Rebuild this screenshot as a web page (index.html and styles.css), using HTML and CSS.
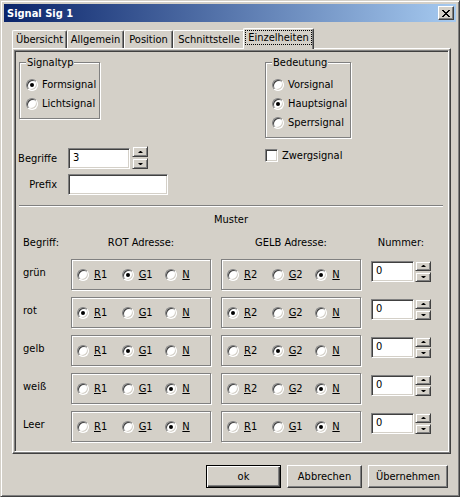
FILE: index.html
```html
<!DOCTYPE html>
<html lang="de">
<head>
<meta charset="utf-8">
<title>Signal Sig 1</title>
<link rel="stylesheet" href="styles.css">
</head>
<body>
<div class="win">
  <div class="titlebar">
    <span class="title">Signal Sig 1</span>
    <span class="close"><svg width="8" height="7" viewBox="0 0 8 7" shape-rendering="crispEdges"><path d="M0 0h2v1h-2z M6 0h2v1h-2z M1 1h2v1h-2z M5 1h2v1h-2z M2 2h4v1h-4z M3 3h2v1h-2z M2 4h4v1h-4z M1 5h2v1h-2z M5 5h2v1h-2z M0 6h2v1h-2z M6 6h2v1h-2z" fill="#000"/></svg></span>
  </div>
  <div class="tabs">
    <div class="tab w1">Übersicht</div>
    <div class="tab w2">Allgemein</div>
    <div class="tab w3">Position</div>
    <div class="tab w4">Schnittstelle</div>
    <div class="tab sel"><span class="focus">Einzelheiten</span></div>
  </div>
  <div class="panel">
    <div class="frame">
      <div class="top">
        <div class="colL">
          <div class="group gtyp">
            <span class="legend">Signaltyp</span>
            <div class="opt"><span class="rb on"></span>Formsignal</div>
            <div class="opt"><span class="rb"></span>Lichtsignal</div>
          </div>
          <div class="frow r1">
            <span class="flabel lb">Begriffe</span>
            <div class="field fbeg">3</div>
            <div class="spin big"><span class="sb up"></span><span class="sb dn"></span></div>
          </div>
          <div class="frow r2">
            <span class="flabel lpx">Prefix</span>
            <div class="field fpre"></div>
          </div>
        </div>
        <div class="colR">
          <div class="group gbed">
            <span class="legend">Bedeutung</span>
            <div class="opt"><span class="rb"></span>Vorsignal</div>
            <div class="opt"><span class="rb on"></span>Hauptsignal</div>
            <div class="opt"><span class="rb"></span>Sperrsignal</div>
          </div>
          <div class="chkrow"><span class="cb"></span>Zwergsignal</div>
        </div>
      </div>
      <div class="sep"></div>
      <div class="muster">Muster</div>
      <div class="mhead">
        <span class="c-lab">Begriff:</span>
        <span class="c-box">ROT Adresse:</span>
        <span class="c-box">GELB Adresse:</span>
        <span class="c-num">Nummer:</span>
      </div>
      <div class="mrows">
        <div class="mrow">
          <span class="c-lab">grün</span>
          <div class="abox"><span class="aopt"><span class="rb"></span><u>R</u>1</span><span class="aopt"><span class="rb on"></span><u>G</u>1</span><span class="aopt"><span class="rb"></span><u>N</u></span></div>
          <div class="abox"><span class="aopt"><span class="rb"></span><u>R</u>2</span><span class="aopt"><span class="rb"></span><u>G</u>2</span><span class="aopt"><span class="rb on"></span><u>N</u></span></div>
          <div class="field fnum">0</div>
          <div class="spin small"><span class="sb up"></span><span class="sb dn"></span></div>
        </div>
        <div class="mrow">
          <span class="c-lab">rot</span>
          <div class="abox"><span class="aopt"><span class="rb on"></span><u>R</u>1</span><span class="aopt"><span class="rb"></span><u>G</u>1</span><span class="aopt"><span class="rb"></span><u>N</u></span></div>
          <div class="abox"><span class="aopt"><span class="rb on"></span><u>R</u>2</span><span class="aopt"><span class="rb"></span><u>G</u>2</span><span class="aopt"><span class="rb"></span><u>N</u></span></div>
          <div class="field fnum">0</div>
          <div class="spin small"><span class="sb up"></span><span class="sb dn"></span></div>
        </div>
        <div class="mrow">
          <span class="c-lab">gelb</span>
          <div class="abox"><span class="aopt"><span class="rb"></span><u>R</u>1</span><span class="aopt"><span class="rb on"></span><u>G</u>1</span><span class="aopt"><span class="rb"></span><u>N</u></span></div>
          <div class="abox"><span class="aopt"><span class="rb"></span><u>R</u>2</span><span class="aopt"><span class="rb on"></span><u>G</u>2</span><span class="aopt"><span class="rb"></span><u>N</u></span></div>
          <div class="field fnum">0</div>
          <div class="spin small"><span class="sb up"></span><span class="sb dn"></span></div>
        </div>
        <div class="mrow">
          <span class="c-lab">weiß</span>
          <div class="abox"><span class="aopt"><span class="rb"></span><u>R</u>1</span><span class="aopt"><span class="rb"></span><u>G</u>1</span><span class="aopt"><span class="rb on"></span><u>N</u></span></div>
          <div class="abox"><span class="aopt"><span class="rb"></span><u>R</u>2</span><span class="aopt"><span class="rb"></span><u>G</u>2</span><span class="aopt"><span class="rb on"></span><u>N</u></span></div>
          <div class="field fnum">0</div>
          <div class="spin small"><span class="sb up"></span><span class="sb dn"></span></div>
        </div>
        <div class="mrow">
          <span class="c-lab">Leer</span>
          <div class="abox"><span class="aopt"><span class="rb"></span><u>R</u>1</span><span class="aopt"><span class="rb"></span><u>G</u>1</span><span class="aopt"><span class="rb on"></span><u>N</u></span></div>
          <div class="abox"><span class="aopt"><span class="rb"></span><u>R</u>1</span><span class="aopt"><span class="rb"></span><u>G</u>1</span><span class="aopt"><span class="rb on"></span><u>N</u></span></div>
          <div class="field fnum">0</div>
          <div class="spin small"><span class="sb up"></span><span class="sb dn"></span></div>
        </div>
      </div>
    </div>
  </div>
  <div class="footer">
    <div class="btn def">ok</div>
    <div class="btn">Abbrechen</div>
    <div class="btn wide">Übernehmen</div>
  </div>
</div>
</body>
</html>
```
FILE: styles.css
```css
html, body {
  margin: 0;
  padding: 0;
  background: #d4d0c8;
}
body {
  font-family: "DejaVu Sans Condensed", "Liberation Sans", sans-serif;
  font-size: 11px;
  line-height: 13px;
  color: #000;
}
* { box-sizing: border-box; }

.win {
  width: 460px;
  height: 497px;
  border: 1px solid;
  border-color: #d4d0c8 #404040 #404040 #d4d0c8;
  box-shadow: inset 1px 1px #fff, inset -1px -1px #808080;
  padding: 3px;
  background: #d4d0c8;
}

.titlebar {
  height: 18px;
  display: flex;
  align-items: center;
  justify-content: space-between;
  padding-left: 3px;
  padding-right: 2px;
  background: linear-gradient(to right, #0a246a, #a6caf0);
}
.title {
  color: #fff;
  font-weight: bold;
}
.close {
  width: 16px;
  height: 14px;
  display: flex;
  align-items: center;
  justify-content: center;
  background: #d4d0c8;
  border: 1px solid;
  border-color: #fff #404040 #404040 #fff;
  box-shadow: inset -1px -1px #808080;
  padding-right: 1px;
}
.close svg { display: block; }

.tabs {
  height: 26px;
  padding-top: 6px;
  padding-left: 8px;
  display: flex;
  align-items: flex-start;
}
.tab {
  height: 18px;
  margin-top: 2px;
  border: 1px solid;
  border-bottom: 0;
  border-color: #fff #404040 #fff #fff;
  border-radius: 2px 2px 0 0;
  box-shadow: inset -1px 0 #808080;
  text-align: center;
  padding-top: 2px;
  background: #d4d0c8;
  white-space: nowrap;
}
.w1 { width: 55px; }
.w2 { width: 57px; }
.w3 { width: 49px; }
.w4 { width: 72px; }
.tab.sel {
  width: 71px;
  height: 21px;
  margin: 0 -2px -1px -2px;
  padding-top: 1px;
  position: relative;
  z-index: 1;
}
.focus {
  display: inline-block;
  border: 1px dotted #000;
  padding: 0 2px;
}

.panel {
  margin-left: 8px;
  width: 439px;
  height: 406px;
  border: 1px solid;
  border-color: #fff #404040 #404040 #fff;
  box-shadow: inset -1px -1px #808080;
  padding: 1px;
}
.frame {
  height: 100%;
  border: 1px solid;
  border-color: #808080 #fff #fff #808080;
  box-shadow: inset 1px 1px #404040, inset -1px -1px #d4d0c8;
}

.top {
  display: flex;
}
.colL { width: 250px; }
.colR { flex: 1; }

.group {
  border: 1px solid #808080;
  box-shadow: inset 1px 1px #fff, 1px 1px #fff;
  padding: 0 6px 5px 6px;
  margin-top: 11px;
}
.gtyp { width: 81px; margin-left: 4px; }
.gbed { width: 86px; }
.legend {
  display: block;
  width: max-content;
  margin: -7px 0 6px 0;
  padding: 0 1px;
  background: #d4d0c8;
}
.opt {
  height: 19px;
  display: flex;
  align-items: center;
  white-space: nowrap;
}
.opt .rb { margin-right: 4px; }

.rb {
  flex: none;
  width: 12px;
  height: 12px;
  border-radius: 50%;
  border: 1px solid;
  border-color: #808080 #fff #fff #808080;
  background: #fff;
  box-shadow: inset 1px 1px #404040, inset -1px -1px #d4d0c8;
  display: flex;
  align-items: center;
  justify-content: center;
}
.rb.on::after {
  content: "";
  width: 4px;
  height: 4px;
  border-radius: 50%;
  background: #000;
}

.cb {
  flex: none;
  width: 13px;
  height: 13px;
  border: 1px solid;
  border-color: #808080 #fff #fff #808080;
  background: #fff;
  box-shadow: inset 1px 1px #404040, inset -1px -1px #d4d0c8;
  margin-right: 4px;
}
.chkrow {
  display: flex;
  align-items: center;
  margin-top: 11px;
  height: 13px;
}

.field {
  border: 1px solid;
  border-color: #808080 #fff #fff #808080;
  background: #fff;
  box-shadow: inset 1px 1px #404040, inset -1px -1px #d4d0c8;
  padding: 2px 3px 0 4px;
}

.frow {
  display: flex;
  align-items: flex-start;
}
.r1 { margin-top: 27px; }
.r2 { margin-top: 5px; }
.flabel {
  width: 42px;
  margin-right: 11px;
  text-align: right;
}
.lb { margin-top: 6px; }
.lpx { margin-top: 4px; }
.fbeg { width: 62px; height: 21px; margin-top: 2px; }
.fpre { width: 100px; height: 21px; }

.spin {
  width: 16px;
  display: flex;
  flex-direction: column;
  gap: 1px;
}
.spin.big { height: 23px; margin-left: 2px; }
.spin.small { height: 21px; margin-left: 1px; margin-top: 2px; }
.sb {
  flex: 1;
  border: 1px solid;
  border-color: #d4d0c8 #404040 #404040 #d4d0c8;
  box-shadow: inset 1px 1px #fff, inset -1px -1px #808080;
  display: flex;
  align-items: center;
  justify-content: center;
}
.sb::after {
  content: "";
  width: 1px;
  height: 0;
  border-left: 2px solid transparent;
  border-right: 2px solid transparent;
}
.sb.up::after { border-bottom: 2px solid #000; }
.sb.dn::after { border-top: 2px solid #000; }

.sep {
  margin: 10px 5px 0 4px;
  border-top: 1px solid #808080;
  border-bottom: 1px solid #fff;
}
.muster {
  margin: 6px 5px 0 4px;
  text-align: center;
}

.mhead {
  display: flex;
  margin-top: 10px;
  padding-left: 8px;
  white-space: nowrap;
}
.c-lab { width: 48px; flex: none; }
.mhead .c-box { width: 140px; margin-right: 10px; text-align: center; }
.c-num { width: 60px; text-align: center; }

.mrows {
  margin-top: 10px;
  padding-left: 8px;
  display: flex;
  flex-direction: column;
  gap: 7px;
}
.mrow {
  display: flex;
  align-items: flex-start;
  height: 31px;
}
.mrow .c-lab { padding-top: 7px; }
.abox {
  width: 140px;
  height: 31px;
  margin-right: 10px;
  border: 1px solid #808080;
  box-shadow: inset 1px 1px #fff, 1px 1px #fff;
  display: flex;
  align-items: center;
  padding-left: 5px;
}
.aopt {
  display: flex;
  align-items: center;
  width: 46px;
  white-space: nowrap;
}
.aopt:nth-child(2) { width: 45px; }
.aopt .rb { margin-right: 5px; }
.fnum { width: 43px; height: 21px; margin-top: 2px; }

.footer {
  margin-top: 11px;
  padding-right: 8px;
  display: flex;
  justify-content: flex-end;
  gap: 6px;
}
.btn {
  width: 75px;
  height: 23px;
  border: 1px solid;
  border-color: #fff #404040 #404040 #fff;
  box-shadow: inset -1px -1px #808080, inset 1px 1px #d4d0c8;
  display: flex;
  align-items: center;
  justify-content: center;
  padding-bottom: 1px;
}
.btn.wide { width: 80px; }
.btn.def {
  border-color: #000;
  box-shadow: inset 1px 1px #fff, inset -1px -1px #404040, inset -2px -2px #808080;
}
```
